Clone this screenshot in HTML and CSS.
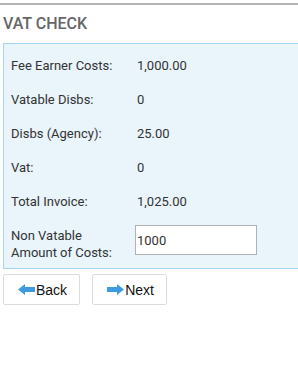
FILE: index.html
```html
<!DOCTYPE html>
<html>
<head>
<meta charset="utf-8">
<link rel="stylesheet" href="styles.css">
</head>
<body>
<div class="page">
  <h1 class="title">VAT CHECK</h1>
  <div class="panel">
    <div class="row"><span class="label">Fee Earner Costs:</span><span class="value">1,000.00</span></div>
    <div class="row"><span class="label">Vatable Disbs:</span><span class="value">0</span></div>
    <div class="row"><span class="label">Disbs (Agency):</span><span class="value">25.00</span></div>
    <div class="row"><span class="label">Vat:</span><span class="value">0</span></div>
    <div class="row"><span class="label">Total Invoice:</span><span class="value">1,025.00</span></div>
    <div class="row row-input"><span class="label label-multi">Non Vatable<br>Amount of Costs:</span><input class="field" type="text" value="1000"></div>
  </div>
  <div class="actions">
    <button class="btn"><svg class="arrow" width="17" height="11" viewBox="0 0 17 11"><path d="M0 5.5 L7 0 L7 3 L17 3 L17 8 L7 8 L7 11 Z" fill="#3d9be0"/></svg>Back</button>
    <button class="btn"><svg class="arrow" width="17" height="11" viewBox="0 0 17 11"><path d="M17 5.5 L10 0 L10 3 L0 3 L0 8 L10 8 L10 11 Z" fill="#3d9be0"/></svg>Next</button>
  </div>
</div>
</body>
</html>
```
FILE: styles.css
```css
html, body {
  margin: 0;
  padding: 0;
  background: #fff;
}
.page {
  margin-top: 3px;
  border-top: 2px solid #b4b4b4;
  font-family: Roboto, "Liberation Sans", sans-serif;
}
.title {
  margin: 0;
  padding: 9px 0 0 3px;
  font-size: 16px;
  line-height: 20px;
  font-weight: 500;
  color: #666;
}
.panel {
  margin: 9px 0 0 3px;
  background: #e9f4fb;
  border: 1px solid #a6d4f2;
  border-right: none;
  padding: 4px 0 7px 7px;
}
.row {
  display: flex;
  align-items: center;
  height: 34px;
  font-size: 13px;
  color: #333;
}
.label {
  width: 124px;
  flex: none;
}
.value {
  padding-left: 2px;
}
.row-input {
  height: auto;
  align-items: flex-start;
  padding-top: 7px;
}
.label-multi {
  line-height: 17px;
  padding-top: 2px;
}
.field {
  width: 122px;
  height: 30px;
  box-sizing: border-box;
  margin: 0;
  border: 1px solid #b2b2b2;
  padding: 0 0 0 1px;
  font-family: Roboto, "Liberation Sans", sans-serif;
  font-size: 13px;
  color: #333;
  background: #fff;
  outline: none;
}
.actions {
  display: flex;
  gap: 12px;
  margin: 5px 0 0 3px;
}
.btn {
  display: flex;
  align-items: center;
  height: 31px;
  margin: 0;
  padding: 0 12px 0 14px;
  background: #fff;
  border: 1px solid #dcdcdc;
  border-radius: 2px;
  font-family: "Liberation Sans", Arial, sans-serif;
  font-size: 14px;
  color: #111;
}
.arrow {
  display: block;
  margin-right: 1px;
}
```
